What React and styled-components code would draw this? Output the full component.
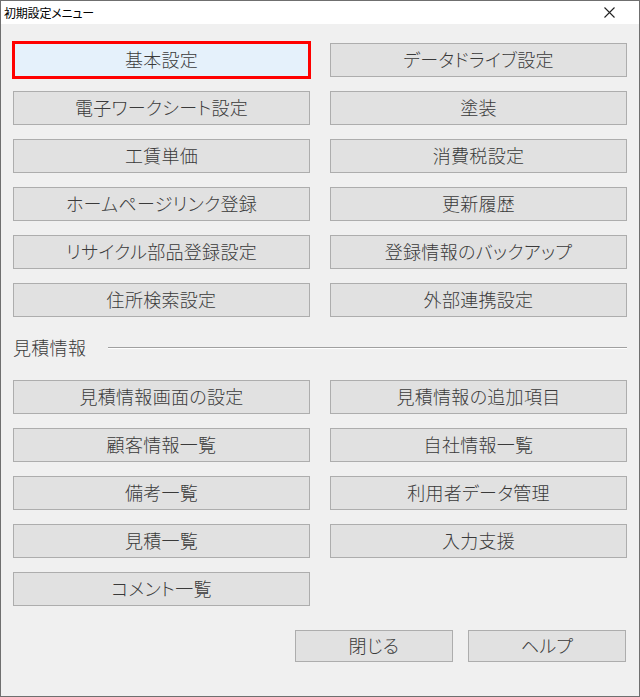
import React from 'react';
import styled, { createGlobalStyle } from 'styled-components';

const GlobalStyle = createGlobalStyle`
    body {
        margin: 0;
        background: #ffffff;
        font-family: "Noto Sans CJK JP", "Noto Sans", sans-serif;
    }
`;

// window frame
const Window = styled.div`
    width: 640px;
    height: 697px;
    box-sizing: border-box;
    border: 1px solid #6f6f6f;
    display: flex;
    flex-direction: column;
    background: #f0f0f0;
`;

const TitleBar = styled.div`
    height: 23px;
    background: #ffffff;
    display: flex;
    align-items: center;
    justify-content: space-between;
    padding: 0 0 0 3px;
`;

const Title = styled.span`
    font-size: 12px;
    color: #000;
    font-feature-settings: "palt";
    letter-spacing: -0.2px;
`;

const CloseBtn = styled.div`
    width: 46px;
    height: 23px;
    display: flex;
    align-items: center;
    justify-content: center;
    margin-right: 7px;
`;

const Content = styled.div`
    flex: 1;
    padding: 19px 12px 0 12px;
    display: flex;
    flex-direction: column;
`;

const Grid = styled.div`
    display: grid;
    grid-template-columns: 297px 297px;
    grid-auto-rows: 34px;
    column-gap: 20px;
    row-gap: 14px;
`;

const Button = styled.div`
    box-sizing: border-box;
    display: flex;
    align-items: center;
    justify-content: center;
    border: ${p => (p.$focused ? '3px solid #ff0000' : '1px solid #adadad')};
    background: ${p => (p.$focused ? '#e5f1fb' : '#e1e1e1')};
    margin: ${p => (p.$focused ? '-2px -1px -2px -1px' : '0')};
    color: #3a3a3a;
    font-size: 18px;
    font-weight: 300;
    font-feature-settings: "palt";
    letter-spacing: 0.3px;
    line-height: 1;
    padding-bottom: 3px;
`;

const SectionHeader = styled.div`
    height: 24px;
    margin: 19px 0 20px 0;
    display: flex;
    align-items: center;
    gap: 22px;
    color: #3a3a3a;
    font-size: 18px;
    font-weight: 300;
    font-feature-settings: "palt";
    letter-spacing: 0.3px;
    padding-bottom: 3px;
    box-sizing: border-box;
`;

const Rule = styled.div`
    flex: 1;
    height: 0;
    border-top: 1px solid #a0a0a0;
    border-bottom: 1px solid #ffffff;
    margin-top: 3px;
`;

const Footer = styled.div`
    display: flex;
    justify-content: flex-end;
    gap: 15px;
    margin-top: 24px;
    padding-right: 1px;
`;

const FooterButton = styled(Button)`
    width: 158px;
    height: 32px;
`;

const topItems = [
    '基本設定', 'データドライブ設定',
    '電子ワークシート設定', '塗装',
    '工賃単価', '消費税設定',
    'ホームページリンク登録', '更新履歴',
    'リサイクル部品登録設定', '登録情報のバックアップ',
    '住所検索設定', '外部連携設定',
];

const estimateItems = [
    '見積情報画面の設定', '見積情報の追加項目',
    '顧客情報一覧', '自社情報一覧',
    '備考一覧', '利用者データ管理',
    '見積一覧', '入力支援',
    'コメント一覧',
];

export default function App() {
    return (
        <>
            <GlobalStyle />
            <Window>
                <TitleBar>
                    <Title>初期設定メニュー</Title>
                    <CloseBtn>
                        <svg width="11" height="11" viewBox="0 0 11 11">
                            <path d="M0.5 0.5 L10.5 10.5 M10.5 0.5 L0.5 10.5" stroke="#222" strokeWidth="1.1" />
                        </svg>
                    </CloseBtn>
                </TitleBar>
                <Content>
                    <Grid>
                        {topItems.map((t, i) => (
                            <Button key={t} $focused={i === 0}>{t}</Button>
                        ))}
                    </Grid>
                    <SectionHeader>
                        <span>見積情報</span>
                        <Rule />
                    </SectionHeader>
                    <Grid>
                        {estimateItems.map(t => (
                            <Button key={t}>{t}</Button>
                        ))}
                    </Grid>
                    <Footer>
                        <FooterButton>閉じる</FooterButton>
                        <FooterButton>ヘルプ</FooterButton>
                    </Footer>
                </Content>
            </Window>
        </>
    );
}
